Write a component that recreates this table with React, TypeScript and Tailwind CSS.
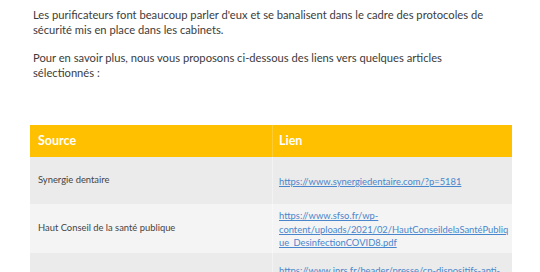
const rows = [
  {
    source: "Synergie dentaire",
    href: "https://www.synergiedentaire.com/?p=5181",
    lines: ["https://www.synergiedentaire.com/?p=5181"],
    height: "h-[47px]",
    bg: "bg-[#ebebeb]",
  },
  {
    source: "Haut Conseil de la santé publique",
    href: "https://www.sfso.fr/wp-content/uploads/2021/02/HautConseildelaSantéPublique_DesinfectionCOVID8.pdf",
    lines: [
      "https://www.sfso.fr/wp-",
      "content/uploads/2021/02/HautConseildelaSantéPubliq",
      "ue_DesinfectionCOVID8.pdf",
    ],
    height: "h-[49px]",
    bg: "bg-[#f4f4f4]",
  },
  {
    source: "INRS",
    href: "https://www.inrs.fr/header/presse/cp-dispositifs-anti-covid-epurateurs.html",
    lines: [
      "https://www.inrs.fr/header/presse/cp-dispositifs-anti-",
      "covid-epurateurs-d-air-quels-sont-les-principes-",
      "de-fonctionnement.html",
    ],
    height: "h-[60px]",
    bg: "bg-[#ebebeb]",
  },
];

export default function App() {
  return (
    <div className="w-[540px] h-[272px] overflow-hidden bg-white font-['Lato',sans-serif]">
      {/* Intro text */}
      <div className="pl-[33px] pr-6 pt-[7px] text-[11.2px] leading-[15px] text-[#3c3c3c]">
        <p className="whitespace-nowrap">
          Les purificateurs font beaucoup parler d'eux et se banalisent dans le cadre des protocoles de
          <br />
          sécurité mis en place dans les cabinets.
        </p>
        <p className="mt-[13px] whitespace-nowrap">
          Pour en savoir plus, nous vous proposons ci-dessous des liens vers quelques articles
          <br />
          sélectionnés :
        </p>
      </div>

      {/* Links table */}
      <div className="ml-[30px] mt-[45px] w-[482px]">
        <div className="flex h-[32px] bg-[#ffc000] text-[12.5px] font-bold text-white">
          <div className="flex w-[242px] items-center px-2">Source</div>
          <div className="flex flex-1 items-center border-l border-white/20 pl-[6px]">Lien</div>
        </div>
        {rows.map((r) => (
          <div key={r.source} className={`flex ${r.height} ${r.bg}`}>
            <div className="flex w-[242px] items-center px-2 text-[9.4px] text-[#444]">{r.source}</div>
            <div className="flex flex-1 items-center border-l border-white/40 pl-[6px]">
              <a
                href={r.href}
                className="whitespace-nowrap pt-[2px] text-[9.4px] leading-[13.5px] text-[#4a86cc] underline"
              >
                {r.lines.map((l, i) => (
                  <span key={i} className="block">
                    {l}
                  </span>
                ))}
              </a>
            </div>
          </div>
        ))}
      </div>
    </div>
  );
}
